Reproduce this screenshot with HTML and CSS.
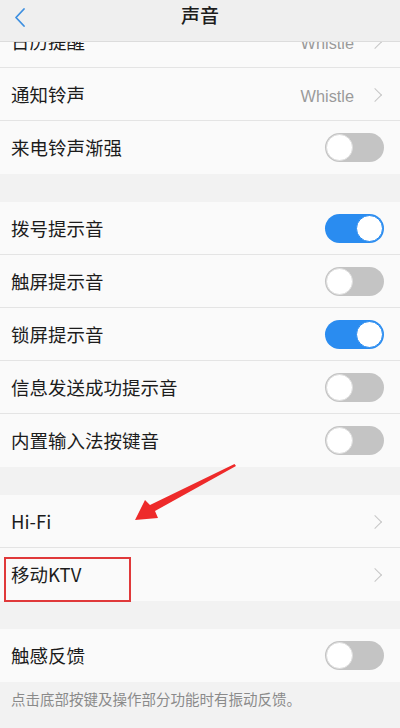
FILE: index.html
```html
<!DOCTYPE html>
<html lang="zh-CN">
<head>
  <meta charset="UTF-8" />
  <meta name="viewport" content="width=device-width, initial-scale=1.0"/>
  <title>声音</title>
  <link rel="stylesheet" href="styles.css">
</head>
<body>
  <header class="topbar">
    <svg class="back" width="14" height="22" viewBox="0 0 14 22">
      <path d="M11 2 L3 10.5 L11 19" fill="none" stroke="#3d8fe0" stroke-width="1.8" stroke-linecap="round" stroke-linejoin="round"/>
    </svg>
    <h1>声音</h1>
  </header>

  <main class="list">
    <section class="group first">
      <div class="row"><span class="label">日历提醒</span><span class="value">Whistle</span><span class="chev"></span></div>
      <div class="row"><span class="label">通知铃声</span><span class="value">Whistle</span><span class="chev"></span></div>
      <div class="row"><span class="label">来电铃声渐强</span><span class="switch"></span></div>
    </section>

    <section class="group">
      <div class="row"><span class="label">拨号提示音</span><span class="switch on"></span></div>
      <div class="row"><span class="label">触屏提示音</span><span class="switch"></span></div>
      <div class="row"><span class="label">锁屏提示音</span><span class="switch on"></span></div>
      <div class="row"><span class="label">信息发送成功提示音</span><span class="switch"></span></div>
      <div class="row"><span class="label">内置输入法按键音</span><span class="switch"></span></div>
    </section>

    <section class="group">
      <div class="row"><span class="label">Hi-Fi</span><span class="chev"></span></div>
      <div class="row"><span class="label">移动KTV</span><span class="chev"></span><span class="mark"></span></div>
    </section>

    <section class="group">
      <div class="row"><span class="label">触感反馈</span><span class="switch"></span></div>
    </section>
    <p class="note">点击底部按键及操作部分功能时有振动反馈。</p>

    <svg class="arrow" width="112" height="66" viewBox="0 0 112 66">
      <path d="M104.5 5 L106 7 L25 52 L28 59 L5 61 L15 41 L20 46 Z" fill="#ee2a2a"/>
    </svg>
  </main>
</body>
</html>
```

FILE: styles.css
```css
html, body {
  margin: 0;
  padding: 0;
  height: 100%;
  font-family: "Noto Sans CJK SC", "Liberation Sans", sans-serif;
  background-color: #f2f2f2;
  color: #1c1c1c;
}

body {
  overflow: hidden;
}

.topbar {
  position: relative;
  z-index: 2;
  height: 41px;
  background-color: #efefef;
  border-bottom: 1px solid #dcdcdc;
  display: flex;
  align-items: center;
  justify-content: center;
}

.topbar h1 {
  margin: 0;
  font-size: 19px;
  font-weight: 500;
  margin-top: -12px;
}

.back {
  position: absolute;
  left: 13px;
  top: 7px;
}

.list {
  position: relative;
}

.group {
  background-color: #fafafa;
  margin-top: 28px;
}

.group.first {
  margin-top: -27px;
}

.row {
  position: relative;
  height: 52px;
  display: flex;
  align-items: center;
  padding: 0 17px 0 11px;
  border-bottom: 1px solid #e4e4e4;
}

.group .row:last-child {
  border-bottom: 1px solid transparent;
}

.label {
  flex: 1;
  font-size: 18.5px;
}

.value {
  font-family: "Liberation Sans", sans-serif;
  font-size: 16.3px;
  color: #9a9a9a;
  margin-right: 16px;
  padding-top: 4px;
}

.chev {
  width: 9px;
  height: 9px;
  border-top: 1.5px solid #c6c6c6;
  border-right: 1.5px solid #c6c6c6;
  transform: rotate(45deg);
  margin-right: 3px;
  margin-top: 2px;
}

.switch {
  position: relative;
  width: 59px;
  height: 29px;
  border-radius: 15px;
  background-color: #c4c4c4;
  margin-right: -1px;
}

.switch::before {
  content: "";
  position: absolute;
  top: 1px;
  left: 1px;
  width: 25px;
  height: 25px;
  border-radius: 50%;
  background-color: #fff;
  border: 1px solid #dedede;
}

.switch.on {
  background-color: #2a8cf0;
}

.switch.on::before {
  left: auto;
  right: 1px;
  border-color: #2a8cf0;
}

.mark {
  position: absolute;
  left: 4px;
  top: 9px;
  width: 123px;
  height: 41px;
  border: 2px solid #e0393a;
}

.note {
  margin: 6px 11px 0;
  font-size: 14.5px;
  color: #8a8a8a;
}

.arrow {
  position: absolute;
  left: 130px;
  top: 444px;
}
```
